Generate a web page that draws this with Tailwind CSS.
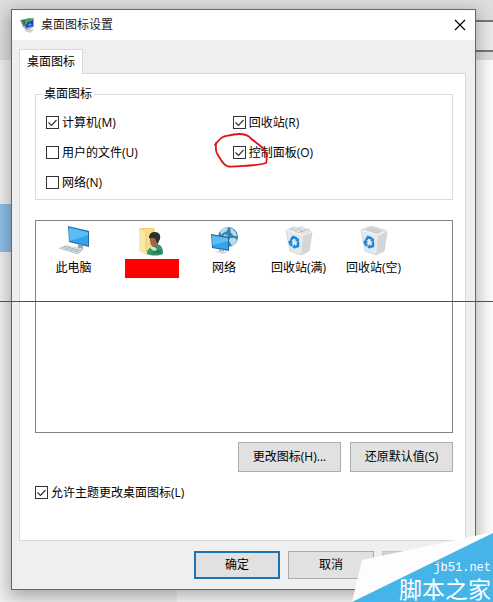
<!DOCTYPE html>
<html lang="zh-CN">
<head>
    <meta charset="UTF-8">
    <meta name="viewport" content="width=device-width, initial-scale=1.0">
    <title>桌面图标设置</title>
    <script src="https://cdn.jsdelivr.net/npm/@tailwindcss/browser@4"></script>
</head>
<body class="relative min-h-screen overflow-hidden bg-[#fcfcfc] pt-[9px] pb-3 pl-[11px] pr-[17px] text-xs text-black font-['Open_Sans','Noto_Sans_CJK_SC',sans-serif]">
    <!-- Window behind the dialog -->
    <div class="absolute inset-0 flex flex-col" aria-hidden="true">
        <div class="flex h-[60px] shrink-0 items-start justify-end bg-[#dedede]">
            <div class="mt-5 h-8 w-20 border-y-2 border-[#777] bg-[#ebebeb]"></div>
        </div>
        <div class="w-[177px] grow bg-[#f0f0f0] pt-36">
            <div class="h-12 w-4 bg-[#8fbfe6]"></div>
        </div>
    </div>

    <!-- Dialog -->
    <div class="relative border border-[#2478b4] bg-[#efefef] shadow-[0_5px_16px_2px_rgba(0,0,0,0.3)]">
        <div class="flex h-[30px] items-center bg-white pl-2 pr-[9px]">
            <svg class="h-4 w-4" viewBox="0 0 16 16">
                <path d="M5 12l5-1 4 2-4 3-5-2z" fill="#cdd1d4"/>
                <path d="M0 3l4-1 10-1 0 9-8 3-3-3z" fill="#a3b0b8"/>
                <path d="M4 3l9-1 0 7-7 2z" fill="#1b3fc4"/>
                <path d="M3 3l6-2 4 1-1 2-4 1-2 3-1-1z" fill="#3fae49"/>
                <path d="M1 4l4 0M2 6l3 0M3 8l2 0" stroke="#20313c"/>
                <path d="M7 9l3-3 2 2z" fill="#6b9cf0"/>
            </svg>
            <h1 class="ml-[5px] grow leading-4 text-[#222]">桌面图标设置</h1>
            <button type="button" class="flex h-4 w-3 items-center justify-center">
                <svg class="h-3 w-3" viewBox="0 0 12 12" fill="none" stroke="#000" stroke-width="1.2">
                    <path d="M1 1l10 10M11 1L1 11"/>
                </svg>
            </button>
        </div>

        <div class="pl-[7px] pr-[9px] pt-[9px]">
            <!-- Tab -->
            <button type="button" class="relative z-10 -mb-px block h-[25px] border border-b-0 border-[#d9d9d9] bg-white px-[7px] leading-4">桌面图标</button>

            <div class="border border-[#d9d9d9] bg-white pt-3 pb-[39px] pl-[15px] pr-3">
                <fieldset class="border border-[#dcdcdc] pl-[10px] pb-2">
                    <legend class="-ml-1 px-[2px] leading-4">桌面图标</legend>
                    <div class="grid grid-cols-[46%_1fr] gap-y-[13px] pt-3">
                        <label class="flex h-[17px] items-center gap-[3px]">
                            <span class="grid">
                                <input type="checkbox" checked class="peer col-start-1 row-start-1 h-[13px] w-[13px] appearance-none border border-[#333] bg-white">
                                <svg class="pointer-events-none col-start-1 row-start-1 hidden h-[13px] w-[13px] peer-checked:block" viewBox="0 0 13 13" fill="none" stroke="#333" stroke-width="1.2"><path d="M2.500 6.500l3 3 5-5.500"/></svg>
                            </span>
                            计算机(M)
                        </label>
                        <label class="flex h-[17px] items-center gap-[3px]">
                            <span class="grid">
                                <input type="checkbox" checked class="peer col-start-1 row-start-1 h-[13px] w-[13px] appearance-none border border-[#333] bg-white">
                                <svg class="pointer-events-none col-start-1 row-start-1 hidden h-[13px] w-[13px] peer-checked:block" viewBox="0 0 13 13" fill="none" stroke="#333" stroke-width="1.2"><path d="M2.500 6.500l3 3 5-5.500"/></svg>
                            </span>
                            回收站(R)
                        </label>
                        <label class="flex h-[17px] items-center gap-[3px]">
                            <span class="grid">
                                <input type="checkbox" class="peer col-start-1 row-start-1 h-[13px] w-[13px] appearance-none border border-[#333] bg-white">
                                <svg class="pointer-events-none col-start-1 row-start-1 hidden h-[13px] w-[13px] peer-checked:block" viewBox="0 0 13 13" fill="none" stroke="#333" stroke-width="1.2"><path d="M2.500 6.500l3 3 5-5.500"/></svg>
                            </span>
                            用户的文件(U)
                        </label>
                        <div class="relative">
                            <label class="flex h-[17px] items-center gap-[3px]">
                                <span class="grid">
                                    <input type="checkbox" checked class="peer col-start-1 row-start-1 h-[13px] w-[13px] appearance-none border border-[#333] bg-white">
                                    <svg class="pointer-events-none col-start-1 row-start-1 hidden h-[13px] w-[13px] peer-checked:block" viewBox="0 0 13 13" fill="none" stroke="#333" stroke-width="1.2"><path d="M2.500 6.500l3 3 5-5.500"/></svg>
                                </span>
                                控制面板(O)
                            </label>
                            <!-- Hand-drawn ring -->
                            <svg class="pointer-events-none absolute -left-5 -top-3 h-9 w-14" viewBox="0 0 56 36" fill="none" stroke="#e01212" stroke-width="1.8" stroke-linecap="round" stroke-linejoin="round">
                                <path d="M2 13C5 9 7 6 11 4.500C16 3.500 20 2 26 2C31 2 36 4 38 6.500C43 11 51 15 53 21C54 25 54 28 53 31C47 33 42 33 36 33.500C29 34 22 35 15 34.500C10 33 8 28 5 23C2 20 3 16 3 11"/>
                            </svg>
                        </div>
                        <label class="flex h-[17px] items-center gap-[3px]">
                            <span class="grid">
                                <input type="checkbox" class="peer col-start-1 row-start-1 h-[13px] w-[13px] appearance-none border border-[#333] bg-white">
                                <svg class="pointer-events-none col-start-1 row-start-1 hidden h-[13px] w-[13px] peer-checked:block" viewBox="0 0 13 13" fill="none" stroke="#333" stroke-width="1.2"><path d="M2.500 6.500l3 3 5-5.500"/></svg>
                            </span>
                            网络(N)
                        </label>
                    </div>
                </fieldset>

                <!-- Icon list -->
                <ul class="mt-5 flex h-[213px] flex-wrap content-start border border-[#828282] bg-white pt-[5px]">
                    <li class="flex w-[75px] flex-col items-center">
                        <svg class="h-8 w-8" viewBox="0 0 32 32">
                            <path d="M10 0l21 5v16l-20-5z" fill="#2a6f9f"/>
                            <path d="M11 1.500l19 4.700v13.300l-18-4.500z" fill="#31a4ee"/>
                            <path d="M11 1.500l19 4.700v3L11.500 15z" fill="#5cbcf7"/>
                            <path d="M20 18l5 1v4l-5-1z" fill="#9aa4ab"/>
                            <path d="M17 21l9 2-3 2-7-2z" fill="#c3cbd1"/>
                            <path d="M8 19l17 4-5 5L1 22z" fill="#dbe0e4"/>
                            <path d="M1 22l19 6 5-5M4 21l17 5M6 20l17 5M7 24l5-4M12 26l5-5M16 27l5-5" stroke="#a5afb6" stroke-width=".7" fill="none"/>
                        </svg>
                        <span class="mt-[2px] leading-4">此电脑</span>
                    </li>
                    <li class="flex w-[82px] flex-col items-center">
                        <svg class="h-8 w-8" viewBox="0 0 32 32">
                            <path d="M3 2l15 0 1 2v20l-9 2z" fill="#efcf6e"/>
                            <path d="M8 3l11 0v22l-8 1z" fill="#f6dd8b"/>
                            <path d="M3 2l7 4v23l-7-4z" fill="#fbe8a6"/>
                            <path d="M10 6v23" fill="none" stroke="#e6c566" stroke-width=".8"/>
                            <path d="M11 28c0-4 2-6 5-7l5-3c4 1 6 3 6 10-5 2-11 2-16 0z" fill="#359468"/>
                            <path d="M14 22l3-2 4 3-2 3z" fill="#c4e6d3"/>
                            <path d="M14 13c0-4 3-5 6-5s4 3 3 6c-1 5-2 7-5 7s-4-4-4-8z" fill="#9a6948"/>
                            <path d="M13 12c0-5 3-6 6-6 4 0 6 3 5 7l-2 4-2-1c0-3-1-4-3-4s-2 1-4 0z" fill="#2d312b"/>
                            <path d="M17 25l8-1 0 3-8 1z" fill="#2b7b56"/>
                        </svg>
                        <span class="mt-px h-[19px] w-[54px] bg-[#fe0000]"></span>
                    </li>
                    <li class="flex w-[62px] flex-col items-center">
                        <svg class="h-8 w-8" viewBox="0 0 32 32">
                            <circle cx="20" cy="11" r="10" fill="#3484ae"/>
                            <path d="M12 5c2-3 5-4 8-4l-1 4-4 2-2 2zM22 2c4 1 6 4 7 8l-3 0-3-3zM22 12l5 0 2 2c-1 3-3 5-5 6l-3-5z" fill="#b9dceb"/>
                            <path d="M16 8l4 1-1 3-4-1z" fill="#8cc5de"/>
                            <path d="M3 8l18 3v14L4 22z" fill="#246c9d"/>
                            <path d="M4 9.500l16 2.700v11.300L5 21z" fill="#33a5ee"/>
                            <path d="M4 9.500l16 2.700v3L4.500 19z" fill="#60bdf6"/>
                            <path d="M11 23l5 1v3h-5z" fill="#aab3b9"/>
                            <path d="M7 26l7-1 6 1-5 2z" fill="#d5dade"/>
                        </svg>
                        <span class="mt-[2px] leading-4">网络</span>
                    </li>
                    <li class="flex w-[87px] flex-col items-center">
                        <svg class="h-8 w-8" viewBox="0 0 32 32">
                            <path d="M3 4l4-2 3-2 5 1 4-1 3 2 4 0 3 4-10 4z" fill="#e1e4e6"/>
                            <path d="M6 4l4-2 2 3 4-3 3 4 5-3M8 6l6 1 6-2" fill="none" stroke="#b3b9be" stroke-width=".8"/>
                            <path d="M3 4l17 5-2 20-11-4z" fill="#e6e9eb"/>
                            <path d="M20 9l9-3-3 19-8 4z" fill="#d3d7da"/>
                            <path d="M3 4l17 5 9-3" fill="none" stroke="#f7f8f9"/>
                            <path d="M3 4l4 21 11 4 8-4 3-19" fill="none" stroke="#c3c8cc" stroke-width=".7"/>
                            <path d="M8 14l2-3 3 1 1 2M15 16l0 4-3 1M9 20l-2-3 0-2" fill="none" stroke="#2188d8" stroke-width="2.500"/>
                            <path d="M12 15l4 1 0-4zM12 18l-3 3 3 2zM5 16l3-3 2 4z" fill="#2188d8"/>
                        </svg>
                        <span class="mt-[2px] leading-4">回收站(满)</span>
                    </li>
                    <li class="flex w-[63px] flex-col items-center">
                        <svg class="h-8 w-8" viewBox="0 0 32 32">
                            <path d="M3 4l10-4 16 5-9 4z" fill="#e3e6e8"/>
                            <path d="M6 4l7-3 12 4-6 3z" fill="#cbd0d3"/>
                            <path d="M3 4l17 5-2 20-11-4z" fill="#e6e9eb"/>
                            <path d="M20 9l9-4-3 20-8 4z" fill="#d3d7da"/>
                            <path d="M3 4l17 5 9-4" fill="none" stroke="#f7f8f9"/>
                            <path d="M3 4l4 21 11 4 8-4 3-20-16-5z" fill="none" stroke="#c3c8cc" stroke-width=".7"/>
                            <path d="M8 14l2-3 3 1 1 2M15 16l0 4-3 1M9 20l-2-3 0-2" fill="none" stroke="#2188d8" stroke-width="2.500"/>
                            <path d="M12 15l4 1 0-4zM12 18l-3 3 3 2zM5 16l3-3 2 4z" fill="#2188d8"/>
                        </svg>
                        <span class="mt-[2px] leading-4 whitespace-nowrap">回收站(空)</span>
                    </li>
                </ul>

                <div class="mt-[9px] flex justify-end gap-[9px]">
                    <button type="button" class="h-[30px] w-[103px] border border-[#adadad] bg-[#e1e1e1]">更改图标(H)...</button>
                    <button type="button" class="h-[30px] w-[103px] border border-[#adadad] bg-[#e1e1e1]">还原默认值(S)</button>
                </div>

                <label class="mt-3 flex h-[17px] items-center gap-[3px]">
                    <span class="grid">
                        <input type="checkbox" checked class="peer col-start-1 row-start-1 h-[13px] w-[13px] appearance-none border border-[#333] bg-white">
                        <svg class="pointer-events-none col-start-1 row-start-1 hidden h-[13px] w-[13px] peer-checked:block" viewBox="0 0 13 13" fill="none" stroke="#333" stroke-width="1.2"><path d="M2.500 6.500l3 3 5-5.500"/></svg>
                    </span>
                    允许主题更改桌面图标(L)
                </label>
            </div>
        </div>

        <!-- Dialog buttons -->
        <div class="flex justify-end gap-2 py-[10px] pr-[7px]">
            <button type="button" class="h-7 w-[86px] border-2 border-[#1f72b0] bg-[#e1e1e1]">确定</button>
            <button type="button" class="h-7 w-[86px] border border-[#adadad] bg-[#e1e1e1]">取消</button>
            <button type="button" disabled class="h-7 w-[86px] border border-[#c4c4c4] bg-[#d2d2d2]"></button>
        </div>
    </div>

    <div class="absolute inset-x-0 top-[301px] h-px bg-[#b8271f]"></div>

    <!-- Site watermark -->
    <div class="absolute bottom-0 right-0 h-[70px] w-[141px] text-white">
        <svg class="absolute inset-0 h-full w-full" viewBox="0 0 141 70">
            <path d="M0 70L10 28 141 0v70z" fill="#fdfdfd"/>
            <path d="M0 70L141 1v69z" fill="#45b4e8"/>
        </svg>
        <div class="relative flex h-full flex-col items-end justify-end pr-[2px]">
            <span class="text-xs leading-3 font-['Liberation_Mono',monospace]">jb51.net</span>
            <span class="text-[23px] leading-7 font-['Noto_Sans_CJK_SC',sans-serif]">脚本之家</span>
        </div>
    </div>
</body>
</html>
